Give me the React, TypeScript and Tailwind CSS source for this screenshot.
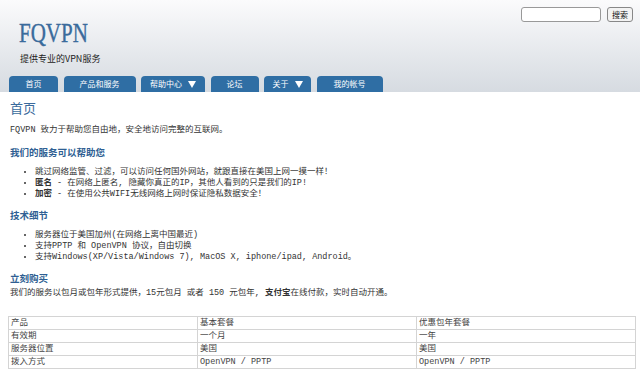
import React from "react";

const cjk = "font-['Liberation_Mono','Noto_Sans_CJK_SC',monospace]";

const navItems = [
    { label: "首页", w: "w-[49px]" },
    { label: "产品和服务", w: "w-[72px]" },
    { label: "帮助中心", w: "w-[64px]", menu: true },
    { label: "论坛", w: "w-[48px]" },
    { label: "关于", w: "w-[47px]", menu: true },
    { label: "我的帐号", w: "w-[66px]" },
];

const rows = [
    ["产品", "基本套餐", "优惠包年套餐"],
    ["有效期", "一个月", "一年"],
    ["服务器位置", "美国", "美国"],
    ["拨入方式", "OpenVPN / PPTP", "OpenVPN / PPTP"],
];

function Caret() {
    return (
        <svg width="8" height="7" viewBox="0 0 8 7" className="ml-[6px]">
            <path d="M0 0 H8 L4 7 Z" fill="#fff" />
        </svg>
    );
}

export default function App() {
    return (
        <div className={`w-[640px] h-[369px] overflow-hidden bg-white text-[#333] ${cjk}`}>
            {/* header */}
            <div className="h-[92px] bg-gradient-to-b from-[#fbfbfc] to-[#d6dbe1] flex flex-col">
                <div className="flex justify-between">
                    <div className="pl-[19px] pt-[19px]">
                        <div className="font-['Liberation_Serif',serif] text-[28px] leading-[28px] text-[#3a6b9c] [-webkit-text-stroke:0.4px_#3a6b9c] scale-x-75 origin-left">
                            FQVPN
                        </div>
                        <div className="mt-[6px] pl-px text-[9px] leading-[12px] text-[#222] font-['Noto_Sans_CJK_SC',sans-serif]">
                            提供专业的VPN服务
                        </div>
                    </div>
                    <div className="flex items-start gap-[6px] pt-[7px] pr-[7px]">
                        <input className="w-[80px] h-[15px] bg-white border border-[#999] rounded-[3px]" />
                        <button className="h-[15px] px-[4px] text-[8px] leading-[12px] text-[#111] bg-[#f3f3f3] border border-[#888] rounded-[3px] font-['Noto_Sans_CJK_SC',sans-serif]">
                            搜索
                        </button>
                    </div>
                </div>
                <div className="mt-auto flex gap-[5.5px] pl-[9px]">
                    {navItems.map((n) => (
                        <div
                            key={n.label}
                            className={`${n.w} h-[16px] bg-[#2f6ea4] rounded-t-[4px] flex items-center justify-center text-white text-[8px] font-['Noto_Sans_CJK_SC',sans-serif]`}
                        >
                            {n.label}
                            {n.menu && <Caret />}
                        </div>
                    ))}
                </div>
            </div>

            {/* content */}
            <div className="px-[10px] text-[8.5px] leading-[11px]">
                <h1 className="mt-[8px] text-[13px] leading-[16px] text-[#3a6b9c] font-['Noto_Sans_CJK_SC',sans-serif]">首页</h1>
                <p className="mt-[9px]">FQVPN 致力于帮助您自由地，安全地访问完整的互联网。</p>

                <h2 className="mt-[10px] text-[9.5px] leading-[13px] font-bold text-[#2f5f93] font-['Noto_Sans_CJK_SC',sans-serif]">我们的服务可以帮助您</h2>
                <ul className="mt-[8px] pl-[25px] list-disc">
                    <li>跳过网络监管、过滤，可以访问任何国外网站，就跟直接在美国上网一摸一样！</li>
                    <li><b>匿名</b> - 在网络上匿名, 隐藏你真正的IP，其他人看到的只是我们的IP!</li>
                    <li><b>加密</b> - 在使用公共WIFI无线网络上网时保证隐私数据安全！</li>
                </ul>

                <h2 className="mt-[9px] text-[9.5px] leading-[13px] font-bold text-[#2f5f93] font-['Noto_Sans_CJK_SC',sans-serif]">技术细节</h2>
                <ul className="mt-[8px] pl-[25px] list-disc">
                    <li>服务器位于美国加州(在网络上离中国最近)</li>
                    <li>支持PPTP 和 OpenVPN 协议，自由切换</li>
                    <li>支持Windows(XP/Vista/Windows 7), MacOS X, iphone/ipad, Android。</li>
                </ul>

                <h2 className="mt-[9px] text-[9.5px] leading-[13px] font-bold text-[#2f5f93] font-['Noto_Sans_CJK_SC',sans-serif]">立刻购买</h2>
                <p className="mt-[3px]">
                    我们的服务以包月或包年形式提供，15元包月 或者 150 元包年, <b>支付宝</b>在线付款，实时自动开通。
                </p>

                <table className="mt-[17px] ml-[-2px] w-[628px] border-collapse table-fixed">
                    <colgroup>
                        <col className="w-[189px]" />
                        <col className="w-[219px]" />
                        <col />
                    </colgroup>
                    <tbody>
                        {rows.map((r) => (
                            <tr key={r[0]}>
                                {r.map((c, i) => (
                                    <td key={i} className="border border-[#d4d4d4] h-[13px] px-[2px] py-0 leading-[12px] text-[#444]">
                                        {c}
                                    </td>
                                ))}
                            </tr>
                        ))}
                    </tbody>
                </table>
            </div>
        </div>
    );
}
